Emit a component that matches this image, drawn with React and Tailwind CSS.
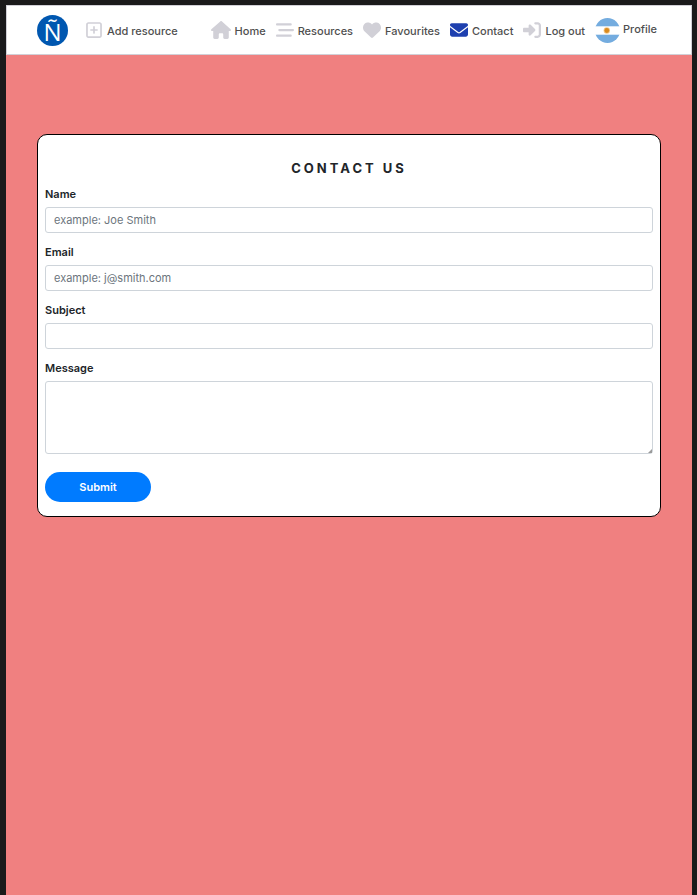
import React from "react";
import {
  FaRegSquarePlus,
  FaHouse,
  FaBarsStaggered,
  FaHeart,
  FaEnvelope,
  FaRightToBracket,
} from "react-icons/fa6";

function Logo() {
  return (
    <span className="flex h-[31px] w-[31px] items-center justify-center rounded-full bg-[#0057b0] pt-1 font-['Open_Sans',sans-serif] text-2xl leading-none text-white">
      Ñ
    </span>
  );
}

function Flag() {
  return (
    <svg viewBox="0 0 25 25" className="h-[25px] w-[25px]" aria-hidden="true">
      <clipPath id="flag-circle">
        <circle cx="12.5" cy="12.5" r="12.5" />
      </clipPath>
      <g clipPath="url(#flag-circle)">
        <rect width="25" height="25" fill="#fff" />
        <rect width="25" height="8.3" fill="#74acdf" />
        <rect y="16.7" width="25" height="8.3" fill="#74acdf" />
        <circle cx="11.8" cy="12.5" r="3.2" fill="#f3c98a" />
        <circle cx="11.8" cy="12.5" r="2.4" fill="#d98a1f" />
      </g>
    </svg>
  );
}

function NavLink({ icon: Icon, label, active, wide }) {
  return (
    <a href="#" className="flex items-center gap-1">
      <Icon
        className={`h-[18px] shrink-0 ${wide ? "w-5" : "w-[18px]"} ${
          active ? "text-[#1e40af]" : "text-[#d1d0d7]"
        }`}
      />
      <span className="pt-0.5">{label}</span>
    </a>
  );
}

function Field({ id, label, children }) {
  return (
    <div className="mb-3 flex flex-col">
      <label htmlFor={id} className="mb-1.5 h-3.5 font-semibold leading-3.5">
        {label}
      </label>
      {children}
    </div>
  );
}

const control =
  "block w-full rounded-[3px] border border-[#ced4da] bg-white px-2 placeholder:text-[#6c757d] outline-none";

export default function App() {
  return (
    <div className="flex min-h-screen flex-col bg-[#1a1a1b] pt-[5px] pr-[5px] pl-[6px] font-[Inter,sans-serif] text-[11px] text-[#212529]">
      <div className="flex grow flex-col bg-[#f08080]">
        <header className="flex h-[50px] items-center border border-[#d1d0d7] bg-white px-[30px] font-medium text-[#4f4f4f]">
          <a href="#" aria-label="Home page">
            <Logo />
          </a>
          <nav className="flex grow items-center pl-[17px]">
            <NavLink icon={FaRegSquarePlus} label="Add resource" />
            <div className="ml-auto flex items-center gap-2.5 pr-1">
              <NavLink icon={FaHouse} label="Home" wide />
              <NavLink icon={FaBarsStaggered} label="Resources" />
              <NavLink icon={FaHeart} label="Favourites" />
              <NavLink icon={FaEnvelope} label="Contact" active />
              <NavLink icon={FaRightToBracket} label="Log out" />
              <a href="#" className="flex items-center gap-[3px]">
                <Flag />
                <span className="pb-0.5">Profile</span>
              </a>
            </div>
          </nav>
        </header>
        <main className="px-[31px] pt-[79px]">
          <form className="rounded-[10px] border border-black bg-white px-[7px] pt-6 pb-3.5">
            <h1 className="mb-2.5 text-center text-[13px] leading-[18px] font-bold tracking-[3px]">
              CONTACT US
            </h1>
            <Field id="name" label="Name">
              <input id="name" type="text" placeholder="example: Joe Smith" className={`${control} h-[26px]`} />
            </Field>
            <Field id="email" label="Email">
              <input id="email" type="email" placeholder="example: j@smith.com" className={`${control} h-[26px]`} />
            </Field>
            <Field id="subject" label="Subject">
              <input id="subject" type="text" className={`${control} h-[26px]`} />
            </Field>
            <Field id="message" label="Message">
              <div className="relative">
                <textarea id="message" className={`${control} h-[73px] resize-none`} />
                <svg
                  viewBox="0 0 4 4"
                  className="pointer-events-none absolute right-px bottom-px h-1 w-1"
                  aria-hidden="true"
                >
                  <path d="M4 0V4H0Z" fill="#9a9a9a" />
                </svg>
              </div>
            </Field>
            <button
              type="submit"
              className="mt-[18px] block h-[30px] w-[106px] rounded-full bg-[#007bff] font-semibold text-white"
            >
              Submit
            </button>
          </form>
        </main>
      </div>
    </div>
  );
}
